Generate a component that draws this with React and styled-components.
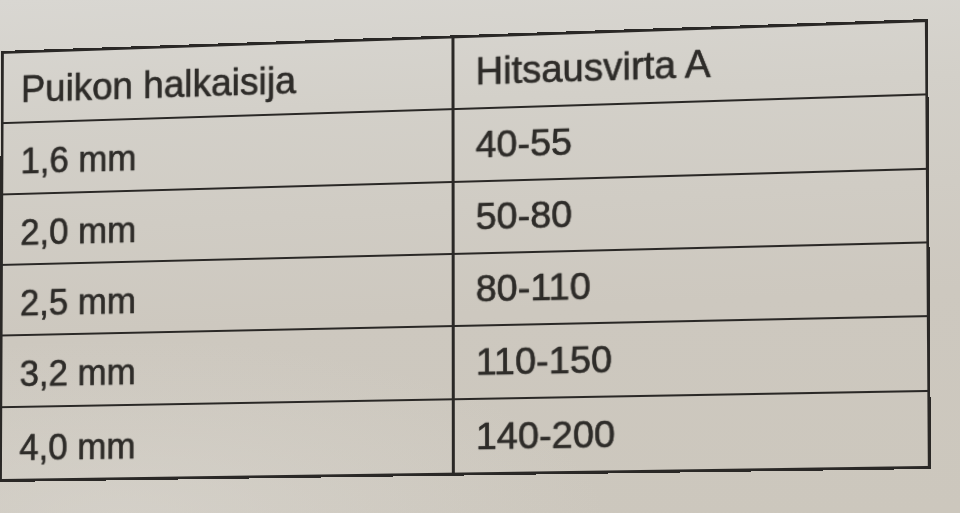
import React from "react";
import styled, { createGlobalStyle } from "styled-components";

const W = 928;
const H = 440;
const LINE = "#2a2826";

// Perspective of the photographed sheet: flat W×H box -> quad in the photo
function homography(w, h, q) {
  const [[x0, y0], [x1, y1], [x2, y2], [x3, y3]] = q;
  const dx1 = x1 - x2, dx2 = x3 - x2, dx3 = x0 - x1 + x2 - x3;
  const dy1 = y1 - y2, dy2 = y3 - y2, dy3 = y0 - y1 + y2 - y3;
  const den = dx1 * dy2 - dx2 * dy1;
  const g = (dx3 * dy2 - dx2 * dy3) / den;
  const hh = (dx1 * dy3 - dx3 * dy1) / den;
  const a = x1 - x0 + g * x1, b = x3 - x0 + hh * x3, c = x0;
  const d = y1 - y0 + g * y1, e = y3 - y0 + hh * y3, f = y0;
  const m = [a / w, d / w, 0, g / w, b / h, e / h, 0, hh / h, 0, 0, 1, 0, c, f, 0, 1];
  return `matrix3d(${m.map((v) => v.toFixed(8)).join(",")})`;
}

const SHEET_TRANSFORM = homography(W, H, [
  [1, 51],
  [928, 19],
  [931, 469],
  [-1, 482],
]);

const Global = createGlobalStyle`
  html, body { margin: 0; padding: 0; }
  body { background: #d0ccc4; }
`;

const Page = styled.div`
  width: 960px;
  height: 513px;
  overflow: hidden;
  background:
    radial-gradient(ellipse 700px 260px at 120px 520px, rgba(220, 217, 211, 0.5), rgba(220, 217, 211, 0) 70%),
    linear-gradient(177deg, #d9d7d2 0%, #d3d0c9 22%, #cdc8bf 60%, #ccc7bd 100%);
`;

const Sheet = styled.div`
  width: ${W}px;
  height: ${H}px;
  box-sizing: border-box;
  border: 3px solid ${LINE};
  display: grid;
  grid-template-columns: 1fr 1fr;
  grid-template-rows: repeat(6, 1fr);
  transform-origin: 0 0;
  transform: ${SHEET_TRANSFORM};
  font-family: "Liberation Sans", Arial, sans-serif;
  color: #2e2c29;
`;

const Cell = styled.div`
  display: flex;
  align-items: flex-end;
  box-sizing: border-box;
  padding: 0 0 ${(p) => (p.$right ? 14 : 11)}px ${(p) => (p.$right ? 21 : 18)}px;
  border-right: ${(p) => (p.$right ? "none" : `3px solid ${LINE}`)};
  border-bottom: ${(p) => (p.$last ? "none" : `2.5px solid ${LINE}`)};
  font-size: ${(p) => (p.$head ? 38 : p.$right ? 37.5 : 36)}px;
  line-height: 1.15;
  white-space: nowrap;
  -webkit-text-stroke: 0.5px #2e2c29;
  text-shadow: 0 0 1.2px rgba(40, 38, 35, 0.45);
`;

const rows = [
  ["Puikon halkaisija", "Hitsausvirta A"],
  ["1,6 mm", "40-55"],
  ["2,0 mm", "50-80"],
  ["2,5 mm", "80-110"],
  ["3,2 mm", "110-150"],
  ["4,0 mm", "140-200"],
];

export default function App() {
  return (
    <>
      <Global />
      <Page>
        <Sheet>
          {rows.map(([left, right], i) => (
            <React.Fragment key={i}>
              <Cell $head={i === 0} $last={i === rows.length - 1}>
                {left}
              </Cell>
              <Cell $right $head={i === 0} $last={i === rows.length - 1}>
                {right}
              </Cell>
            </React.Fragment>
          ))}
        </Sheet>
      </Page>
    </>
  );
}
